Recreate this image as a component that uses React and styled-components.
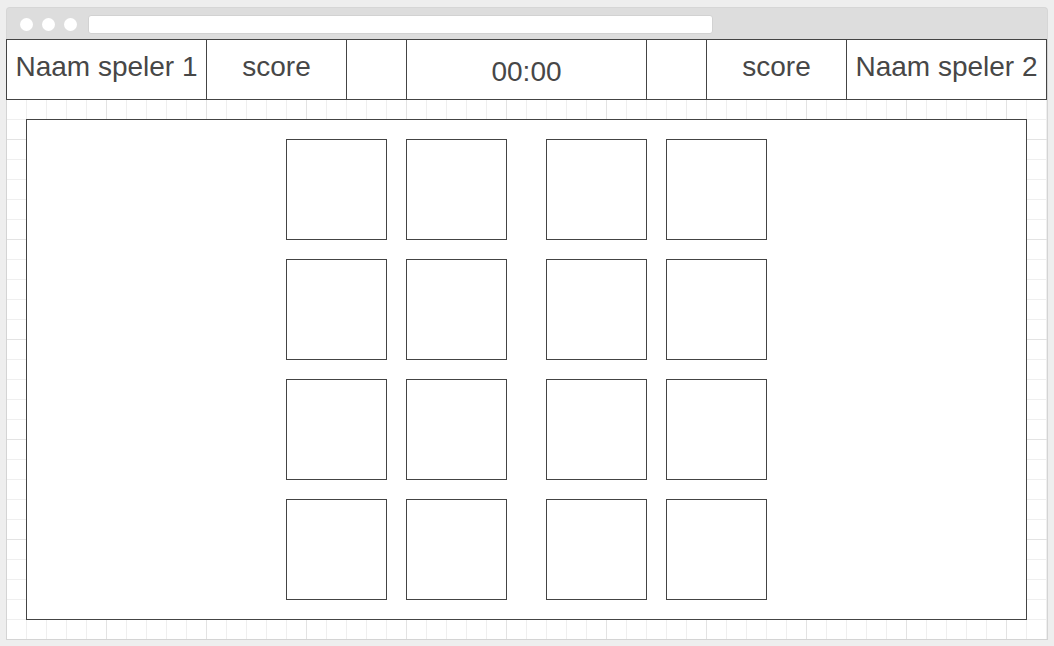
import React from "react";
import styled, { createGlobalStyle } from "styled-components";

const Global = createGlobalStyle`
  html, body { margin: 0; padding: 0; background: #eeeeee; }
  body { font-family: "Liberation Sans", Arial, sans-serif; }
  * { box-sizing: border-box; }
`;

const Window = styled.div`
  margin: 7px 0 0 6px;
  width: 1042px;
`;

const TitleBar = styled.div`
  height: 32px;
  background: #dddddd;
  border: 1px solid #d6d6d6;
  border-bottom: none;
  border-radius: 4px 4px 0 0;
  display: flex;
  align-items: center;
  padding-left: 13px;
  padding-top: 1px;
  gap: 9px;
`;

const Dot = styled.span`
  width: 13px;
  height: 13px;
  border-radius: 50%;
  background: #ffffff;
  flex: none;
`;

const AddressBar = styled.div`
  margin-left: 2px;
  width: 625px;
  height: 19px;
  background: #ffffff;
  border-radius: 3px;
  border: 1px solid #d2d2d2;
`;

const Canvas = styled.div`
  height: 601px;
  border: 1px solid #d4d4d4;
  border-top: none;
  background-color: #ffffff;
  background-origin: border-box;
  background-image:
    linear-gradient(to right, #e3e3e3 1px, transparent 1px),
    linear-gradient(to bottom, #e3e3e3 1px, transparent 1px),
    linear-gradient(to right, #efefef 1px, transparent 1px),
    linear-gradient(to bottom, #efefef 1px, transparent 1px);
  background-size: 100px 100px, 100px 100px, 20px 20px, 20px 20px;
`;

const Header = styled.div`
  display: flex;
  margin-left: -1px;
  width: 1041px;
  height: 61px;
  background: #ffffff;
`;

const Cell = styled.div`
  width: ${(p) => p.$w}px;
  flex: none;
  border: 1px solid #444444;
  border-right: ${(p) => (p.$last ? "1px solid #444444" : "none")};
  display: flex;
  justify-content: center;
  align-items: flex-start;
  padding-top: ${(p) => (p.$low ? 16 : 11)}px;
  font-size: 28px;
  line-height: 32px;
  color: #474747;
  white-space: nowrap;
`;

const Board = styled.div`
  margin: 19px 0 0 19px;
  width: 1001px;
  height: 501px;
  border: 1px solid #444444;
  background: #ffffff;
  display: flex;
  justify-content: center;
  align-items: flex-start;
  gap: 39px;
  padding-top: 19px;
`;

const CardGroup = styled.div`
  display: grid;
  grid-template-columns: repeat(2, 101px);
  grid-auto-rows: 101px;
  gap: 19px;
`;

const Card = styled.div`
  border: 1px solid #444444;
  background: #ffffff;
`;

const cells = [
  { w: 200, t: "Naam speler 1" },
  { w: 140, t: "score" },
  { w: 60, t: "" },
  { w: 240, t: "00:00", low: true },
  { w: 60, t: "" },
  { w: 140, t: "score" },
  { w: 201, t: "Naam speler 2", last: true },
];

export default function App() {
  return (
    <>
      <Global />
      <Window>
        <TitleBar>
          <Dot />
          <Dot />
          <Dot />
          <AddressBar />
        </TitleBar>
        <Canvas>
          <Header>
            {cells.map((c, i) => (
              <Cell key={i} $w={c.w} $last={c.last} $low={c.low}>
                {c.t}
              </Cell>
            ))}
          </Header>
          <Board>
            {[0, 1].map((g) => (
              <CardGroup key={g}>
                {Array.from({ length: 8 }).map((_, i) => (
                  <Card key={i} />
                ))}
              </CardGroup>
            ))}
          </Board>
        </Canvas>
      </Window>
    </>
  );
}
